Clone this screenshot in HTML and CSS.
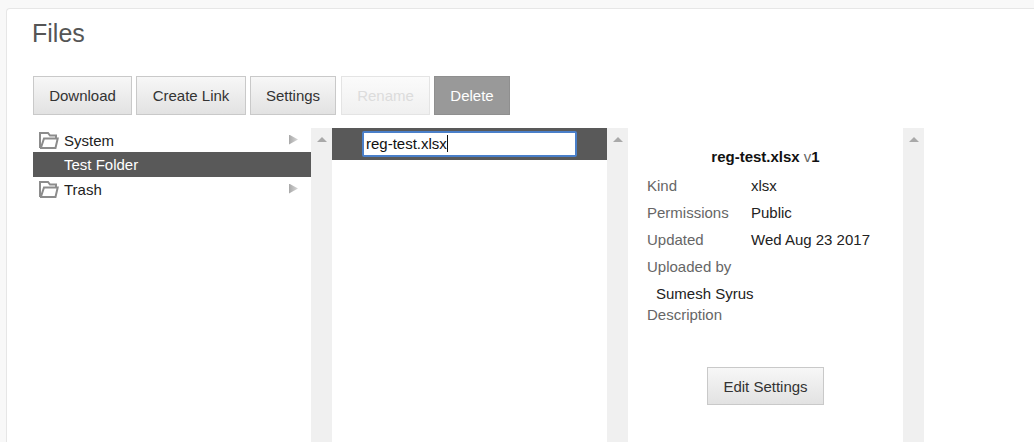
FILE: index.html
```html
<!DOCTYPE html>
<html lang="en">
<head>
  <meta charset="UTF-8">
  <title>Files</title>
  <link rel="stylesheet" href="styles.css">
</head>
<body>
<div class="panel">
  <h1 class="title">Files</h1>

  <!-- Toolbar -->
  <div class="toolbar">
    <button class="btn btn-download">Download</button>
    <button class="btn btn-link">Create Link</button>
    <button class="btn btn-settings">Settings</button>
    <button class="btn btn-rename" disabled>Rename</button>
    <button class="btn btn-delete">Delete</button>
  </div>

  <div class="browser">
    <!-- Folder tree -->
    <div class="column">
      <ul class="tree">
        <li class="tree-row">
          <svg class="folder" width="20" height="17" viewBox="0 0 20 17"><path d="M1 16V1H9L11 3.5H17V6.5M1 16H16.5L18.7 6.5H5L2 15.5" fill="none" stroke="#8c8c8c" stroke-width="2"/></svg>
          <span class="tree-name">System</span>
          <span class="arrow"></span>
        </li>
        <li class="tree-row selected"><span class="tree-name">Test Folder</span></li>
        <li class="tree-row">
          <svg class="folder" width="20" height="17" viewBox="0 0 20 17"><path d="M1 16V1H9L11 3.5H17V6.5M1 16H16.5L18.7 6.5H5L2 15.5" fill="none" stroke="#8c8c8c" stroke-width="2"/></svg>
          <span class="tree-name">Trash</span>
          <span class="arrow"></span>
        </li>
      </ul>
    </div>
    <div class="scrollbar"><span class="scroll-up"></span></div>

    <!-- File list -->
    <div class="column">
      <div class="file-row">
        <div class="rename-input"><span class="rename-text">reg-test.xlsx</span></div>
      </div>
    </div>
    <div class="scrollbar"><span class="scroll-up"></span></div>

    <!-- File details -->
    <div class="column details">
      <div class="details-title"><b>reg-test.xlsx</b> <span class="version">v</span><b>1</b></div>
      <div class="detail-row"><span class="detail-label">Kind</span><span>xlsx</span></div>
      <div class="detail-row"><span class="detail-label">Permissions</span><span>Public</span></div>
      <div class="detail-row"><span class="detail-label">Updated</span><span>Wed Aug 23 2017</span></div>
      <div class="detail-row"><span class="detail-label">Uploaded by</span></div>
      <div class="uploader">Sumesh Syrus</div>
      <div class="description">Description</div>
      <div class="details-actions">
        <button class="btn btn-edit">Edit Settings</button>
      </div>
    </div>
    <div class="scrollbar"><span class="scroll-up"></span></div>
  </div>
</div>
</body>
</html>
```

FILE: styles.css
```css
html, body {
  margin: 0;
  padding: 0;
  height: 100%;
  overflow: hidden;
  font-family: "Liberation Sans", Arial, sans-serif;
  background-color: #f8f8f8;
}

.panel {
  box-sizing: border-box;
  height: 434px;
  margin: 8px 0 0 6px;
  padding: 0 0 0 26px;
  background-color: white;
  border: 1px solid #e6e6e6;
  border-right: none;
  border-bottom: none;
  border-radius: 4px 0 0 0;
}

.title {
  margin: 0 0 0 -1px;
  padding-top: 9px;
  height: 58px;
  font-size: 25px;
  font-weight: 400;
  line-height: 30px;
  color: #555;
}

/* Toolbar */
.toolbar {
  display: flex;
  height: 39px;
  margin-bottom: 13px;
}

.btn {
  height: 39px;
  padding: 0;
  font-family: inherit;
  font-size: 15px;
  color: #333;
  background: linear-gradient(#f7f7f7, #e2e2e2);
  border: 1px solid #c9c9c9;
}

.btn-download { width: 99px; margin-right: 4px; }
.btn-link { width: 110px; margin-right: 4px; }
.btn-settings { width: 86px; margin-right: 5px; }

.btn-rename {
  width: 89px;
  margin-right: 4px;
  color: #dcdcdc;
  background: linear-gradient(#fbfbfb, #f0f0f0);
  border-color: #e4e4e4;
}

.btn-delete {
  width: 76px;
  color: white;
  background: #999;
  border-color: #8f8f8f;
}

.btn-edit {
  width: 117px;
  height: 38px;
}

/* Columns */
.browser {
  display: flex;
  height: 314px;
}

.column {
  width: 278px;
}

.column + .scrollbar + .column {
  width: 275px;
}

.scrollbar {
  width: 21px;
  display: flex;
  justify-content: center;
  padding-top: 9px;
  box-sizing: border-box;
  background-color: #f0f0f0;
}

.scroll-up {
  width: 0;
  height: 0;
  border-left: 5px solid transparent;
  border-right: 5px solid transparent;
  border-bottom: 5px solid #a9a9a9;
}

/* Tree */
.tree {
  list-style: none;
  margin: 0;
  padding: 0;
}

.tree-row {
  display: flex;
  align-items: center;
  height: 24px;
  padding-top: 1px;
  box-sizing: border-box;
  font-size: 15px;
  color: #222;
}

.tree-row.selected {
  height: 25px;
  padding-top: 0;
  background-color: #595959;
  color: white;
}

.folder {
  flex: none;
  margin-left: 6px;
  margin-right: -26px;
}

.tree-name {
  margin-left: 31px;
  flex-grow: 1;
}

.arrow {
  width: 9px;
  height: 10px;
  margin-right: 13px;
  margin-bottom: 2px;
  clip-path: polygon(0 0, 100% 50%, 0 100%);
  background: linear-gradient(to right, #a8a8a8, #d8d8d8);
}

/* File list */
.file-row {
  display: flex;
  align-items: center;
  height: 32px;
  padding-left: 30px;
  background-color: #595959;
}

.rename-input {
  box-sizing: border-box;
  width: 215px;
  height: 26px;
  padding: 0 2px;
  font-size: 15px;
  line-height: 22px;
  color: #111;
  background: white;
  border: 2px solid #4a7fc9;
  border-radius: 2px;
}

.rename-text {
  border-right: 1px solid #111;
}

/* Details */
.details {
  padding: 21px 0 0 19px;
  box-sizing: border-box;
  font-size: 15px;
  color: #222;
}

.details-title {
  margin-bottom: 13px;
  padding-right: 19px;
  font-size: 15px;
  line-height: 16px;
  text-align: center;
  color: #111;
}

.version {
  color: #666;
}

.detail-row {
  display: flex;
  height: 27px;
  line-height: 16px;
}

.detail-label {
  width: 104px;
  color: #666;
}

.uploader {
  height: 21px;
  padding-left: 9px;
  line-height: 16px;
}

.description {
  line-height: 16px;
  color: #666;
}

.details-actions {
  margin-top: 44px;
  padding-right: 19px;
  text-align: center;
}
```
